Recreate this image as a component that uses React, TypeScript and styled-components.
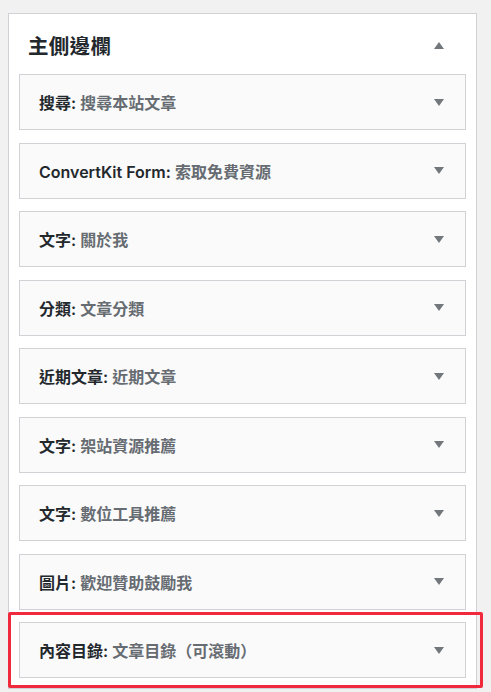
import React from "react";
import styled, { createGlobalStyle } from "styled-components";

const Global = createGlobalStyle`
  html, body { margin: 0; padding: 0; background: #f1f1f1; }
  body { font-family: Inter, "Noto Sans CJK TC", "Noto Sans", sans-serif; -webkit-font-smoothing: antialiased; }
`;

const Page = styled.div`
  padding: 13px 0 0 8px;
`;

const Panel = styled.section`
  box-sizing: border-box;
  width: 469px;
  background: #fff;
  border: 1px solid #cfd1d4;
  padding: 0 10px 10px;
`;

const Header = styled.div`
  height: 60px;
  box-sizing: border-box;
  padding: 2px 22px 0 9px;
  display: flex;
  align-items: center;
  justify-content: space-between;
`;

const Heading = styled.h2`
  margin: 0;
  font-size: 20.5px;
  font-weight: 700;
  color: #23282d;
  letter-spacing: 0.3px;
`;

const List = styled.div`
  display: flex;
  flex-direction: column;
  gap: 12.5px;
`;

const Slot = styled.div`
  position: relative;
`;

const Item = styled.div`
  box-sizing: border-box;
  height: 56px;
  border: 1px solid #d0d2d5;
  background: #fafafa;
  padding: 0 21px 0 19px;
  display: flex;
  align-items: center;
  justify-content: space-between;
`;

const Title = styled.div`
  font-size: 16px;
  font-weight: 600;
  color: #23282d;
  white-space: nowrap;
`;

const Sub = styled.span`
  color: #666c72;
  font-weight: 600;
`;

const Highlight = styled.div`
  position: absolute;
  top: -10px;
  left: -11px;
  right: -17px;
  bottom: -10px;
  border: 3px solid #f0293d;
  border-radius: 2px;
  pointer-events: none;
`;

const Arrow: React.FC<{ up?: boolean }> = ({ up }) => (
  <svg width="10" height="7" viewBox="0 0 10 7" style={{ display: "block" }}>
    {up ? (
      <polygon points="0,7 10,7 5,0" fill="#72777c" />
    ) : (
      <polygon points="0,0 10,0 5,7" fill="#72777c" />
    )}
  </svg>
);

const widgets: { name: string; sub: string }[] = [
  { name: "搜尋", sub: "搜尋本站文章" },
  { name: "ConvertKit Form", sub: "索取免費資源" },
  { name: "文字", sub: "關於我" },
  { name: "分類", sub: "文章分類" },
  { name: "近期文章", sub: "近期文章" },
  { name: "文字", sub: "架站資源推薦" },
  { name: "文字", sub: "數位工具推薦" },
  { name: "圖片", sub: "歡迎贊助鼓勵我" },
  { name: "內容目錄", sub: "文章目錄（可滾動）" },
];

export default function App() {
  return (
    <>
      <Global />
      <Page>
        <Panel>
          <Header>
            <Heading>主側邊欄</Heading>
            <Arrow up />
          </Header>
          <List>
            {widgets.map((w, i) => (
              <Slot key={i}>
                <Item>
                  <Title>
                    {w.name}: <Sub>{w.sub}</Sub>
                  </Title>
                  <Arrow />
                </Item>
                {i === widgets.length - 1 && <Highlight />}
              </Slot>
            ))}
          </List>
        </Panel>
      </Page>
    </>
  );
}
